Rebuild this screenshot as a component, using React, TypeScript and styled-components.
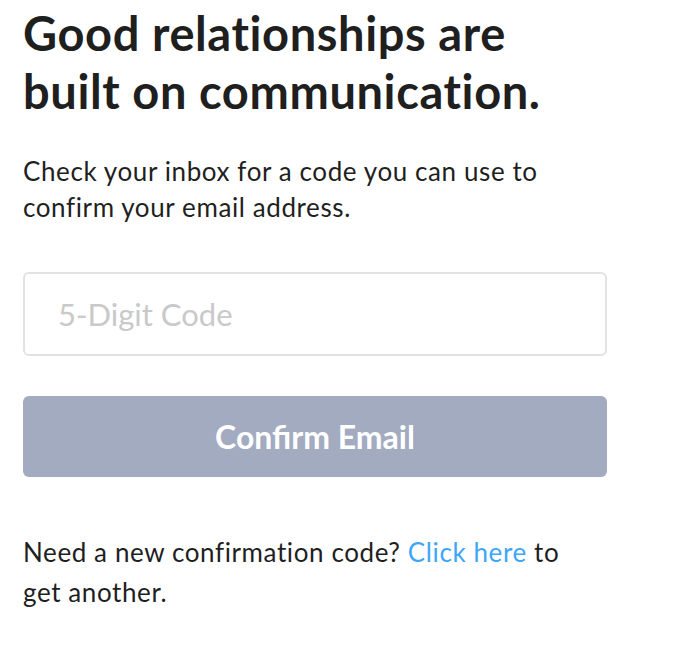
import React from 'react';
import styled, { createGlobalStyle } from 'styled-components';

const GlobalStyle = createGlobalStyle`
  body {
    margin: 0;
    background: #ffffff;
    font-family: Lato, "Open Sans", sans-serif;
    color: #1f1f1f;
  }
`;

const Wrapper = styled.div`
  width: 584px;
  padding: 4px 0 0 23px;
  display: flex;
  flex-direction: column;
`;

const Title = styled.h1`
  margin: 0;
  font-size: 47px;
  line-height: 58px;
  font-weight: 700;
  color: #1f1f1f;
  letter-spacing: 0.6px;
`;

const Text = styled.p<{ $top: number; $lineHeight: number }>`
  margin: ${(p) => p.$top}px 0 0;
  max-width: 570px;
  font-size: 26px;
  line-height: ${(p) => p.$lineHeight}px;
  letter-spacing: 0.6px;
  color: #1f1f1f;
`;

const CodeInput = styled.input`
  box-sizing: border-box;
  margin-top: 47px;
  width: 100%;
  height: 84px;
  border: 2px solid #e2e2e2;
  border-radius: 6px;
  padding: 0 33px;
  font-family: Lato, sans-serif;
  font-size: 31px;
  color: #1f1f1f;
  outline: none;
  &::placeholder {
    color: #c9c9c9;
  }
`;

const SubmitButton = styled.button`
  margin-top: 40px;
  width: 100%;
  height: 81px;
  border: none;
  border-radius: 6px;
  background: #a2abbf;
  color: #ffffff;
  font-family: Lato, sans-serif;
  font-size: 32px;
  font-weight: 700;
  cursor: pointer;
`;

const Link = styled.a`
  color: #3ea6f6;
  text-decoration: none;
`;

const App: React.FC = () => {
  return (
    <Wrapper>
      <GlobalStyle />
      <Title>Good relationships are built on communication.</Title>
      <Text $top={33} $lineHeight={36}>
        Check your inbox for a code you can use to confirm your email address.
      </Text>
      <CodeInput placeholder="5-Digit Code" />
      <SubmitButton type="button">Confirm Email</SubmitButton>
      <Text $top={55} $lineHeight={40}>
        Need a new confirmation code? <Link href="#">Click here</Link> to get
        another.
      </Text>
    </Wrapper>
  );
};

export default App;
